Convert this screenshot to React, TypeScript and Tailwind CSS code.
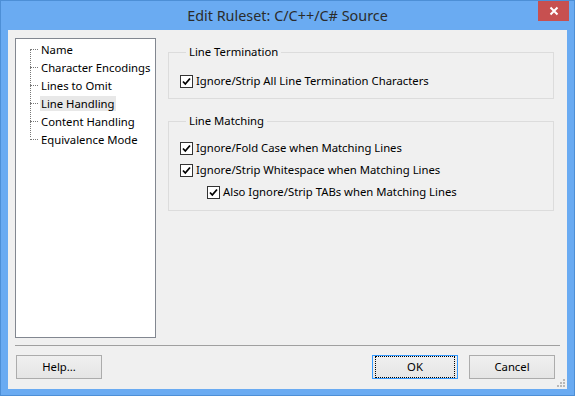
import React from "react";

const font = { fontFamily: '"Noto Sans", "Open Sans", sans-serif' };

const pages = [
  "Name",
  "Character Encodings",
  "Lines to Omit",
  "Line Handling",
  "Content Handling",
  "Equivalence Mode",
];

function CheckBox({ label }: { label: string }) {
  return (
    <div className="flex items-center h-[22px]">
      <span className="w-[13px] h-[13px] border border-[#333] bg-white flex items-center justify-center">
        <svg width="11" height="11" viewBox="0 0 11 11">
          <path d="M2 5.5 L4.3 8 L9 2.5" fill="none" stroke="#000" strokeWidth="1.8" />
        </svg>
      </span>
      <span className="ml-[3px] text-[11.3px] whitespace-nowrap text-black">{label}</span>
    </div>
  );
}

function Group({ title, children, className }: { title: string; children: React.ReactNode; className?: string }) {
  return (
    <fieldset className={"border border-[#dcdcdc] px-[11px] " + (className ?? "")}>
      <legend className="ml-[6px] px-[3px] text-[11.3px] leading-[16px] text-black">{title}</legend>
      {children}
    </fieldset>
  );
}

function Button({ label, focused }: { label: string; focused?: boolean }) {
  return (
    <div
      className={
        "w-[86px] h-[24px] border flex items-center justify-center text-[11.3px] text-black bg-gradient-to-b from-[#f0f0f0] to-[#e5e5e5] " +
        (focused ? "border-[#3399ff]" : "border-[#acacac]")
      }
    >
      {focused ? (
        <div className="w-full h-full border border-dotted border-black m-[2px] flex items-center justify-center">{label}</div>
      ) : (
        label
      )}
    </div>
  );
}

export default function App() {
  return (
    <div className="w-[575px] h-[396px] bg-[#6aabf2] border border-[#4d8fd6] flex flex-col" style={font}>
      <div className="h-[29px] flex items-start relative">
        <div className="flex-1 text-center text-[14.4px] leading-[30px] text-[#2b2b2b]">Edit Ruleset: C/C++/C# Source</div>
        <div className="absolute right-[5px] top-0 w-[31px] h-[20px] bg-[#c75050] flex items-center justify-center">
          <svg width="10" height="10" viewBox="0 0 10 10">
            <path d="M1.5 1.5 L8.5 8.5 M8.5 1.5 L1.5 8.5" stroke="#fff" strokeWidth="2" />
          </svg>
        </div>
      </div>
      <div className="mx-[7px] h-[359px] bg-[#f0f0f0] flex flex-col px-[7px] pt-[8px] relative">
        <div className="flex h-[300px]">
          <div className="w-[141px] h-full bg-white border border-[#828790] relative pl-[14px] pt-[1px]">
            <div className="absolute left-[14px] top-[10px] h-[88px] border-l border-dotted border-[#777]" />
            {pages.map((p) => (
              <div key={p} className="flex items-center h-[18px]">
                <span className="w-[8px] border-t border-dotted border-[#777]" />
                <span
                  className={
                    "ml-[2px] px-[1px] text-[11.3px] leading-[15px] whitespace-nowrap text-black " +
                    (p === "Line Handling" ? "bg-[#e8e8e8]" : "")
                  }
                >
                  {p}
                </span>
              </div>
            ))}
          </div>
          <div className="flex-1 pl-[12px] pr-[6px] pt-[6px] flex flex-col">
            <Group title="Line Termination" className="h-[55px] pt-[10px]">
              <CheckBox label="Ignore/Strip All Line Termination Characters" />
            </Group>
            <Group title="Line Matching" className="h-[98px] mt-[14px] pt-[8px]">
              <CheckBox label="Ignore/Fold Case when Matching Lines" />
              <CheckBox label="Ignore/Strip Whitespace when Matching Lines" />
              <div className="pl-[27px]">
                <CheckBox label="Also Ignore/Strip TABs when Matching Lines" />
              </div>
            </Group>
          </div>
        </div>
        <div className="mt-[7px] border-t border-[#a0a0a0]" />
        <div className="flex mt-[9px] pl-[1px] pr-[5px]">
          <Button label="Help..." />
          <div className="flex-1" />
          <Button label="OK" focused />
          <div className="w-[11px]" />
          <Button label="Cancel" />
        </div>
        <svg className="absolute right-[1px] bottom-[1px]" width="10" height="10" viewBox="0 0 10 10">
          {[
            [7, 1],
            [4, 4],
            [7, 4],
            [1, 7],
            [4, 7],
            [7, 7],
          ].map(([x, y]) => (
            <rect key={x + "-" + y} x={x} y={y} width="2" height="2" fill="#b8b8b8" />
          ))}
        </svg>
      </div>
    </div>
  );
}
